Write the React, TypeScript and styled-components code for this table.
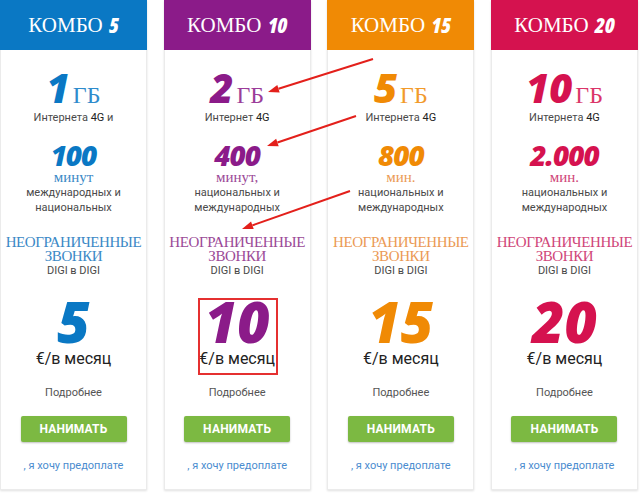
import React from "react";
import styled, { createGlobalStyle } from "styled-components";

const Global = createGlobalStyle`
  html, body { margin: 0; padding: 0; background: #ffffff; }
  body { font-family: Roboto, "Liberation Sans", sans-serif; }
`;

type Plan = {
  name: string;
  color: string;
  soft: string;
  gb: string;
  internet: string;
  minutes: string;
  minLabel: string;
  minDesc: string[];
  price: string;
};

const plans: Plan[] = [
  {
    name: "5",
    color: "#0a78c4",
    soft: "#3b89c6",
    gb: "1",
    internet: "Интернета",
    minutes: "100",
    minLabel: "минут",
    minDesc: ["международных и", "национальных"],
    price: "5",
  },
  {
    name: "10",
    color: "#8b1b89",
    soft: "#9b4a97",
    gb: "2",
    internet: "Интернет",
    minutes: "400",
    minLabel: "минут,",
    minDesc: ["национальных и", "международных"],
    price: "10",
  },
  {
    name: "15",
    color: "#f08a05",
    soft: "#eb9a55",
    gb: "5",
    internet: "Интернета",
    minutes: "800",
    minLabel: "мин.",
    minDesc: ["национальных и", "международных"],
    price: "15",
  },
  {
    name: "20",
    color: "#d5124f",
    soft: "#d04679",
    gb: "10",
    internet: "Интернета",
    minutes: "2.000",
    minLabel: "мин.",
    minDesc: ["национальных и", "международных"],
    price: "20",
  },
];

const Page = styled.div`
  position: relative;
  width: 640px;
  height: 493px;
  overflow: hidden;
`;

const Grid = styled.div`
  display: grid;
  grid-template-columns: repeat(4, 147px);
  justify-content: space-between;
  width: 638px;
`;

const Card = styled.div`
  display: flex;
  flex-direction: column;
  align-items: center;
  background: #fff;
  border: 1px solid #ebebeb;
  border-top: none;
  box-shadow: 0 1px 2px rgba(0, 0, 0, 0.12);
  padding-bottom: 16px;
  text-align: center;
`;

const Header = styled.div<{ $bg: string }>`
  align-self: stretch;
  height: 50px;
  margin: 0 -1px;
  background: ${(p) => p.$bg};
  color: #fff;
  display: flex;
  justify-content: center;
  align-items: center;
  gap: 6px;
  line-height: 50px;
`;

const HeaderWord = styled.span`
  font-family: "Liberation Serif", serif;
  font-size: 21px;
`;

const HeaderNum = styled.span`
  font-family: "Open Sans", sans-serif;
  font-weight: 800;
  font-style: italic;
  font-size: 21px;
  font-stretch: 87.5%;
`;

const GbRow = styled.div<{ $color: string }>`
  margin-top: 16px;
  display: flex;
  align-items: baseline;
  gap: 3px;
  height: 44px;
  line-height: 44px;
  color: ${(p) => p.$color};
`;

const BigNum = styled.span<{ $size: number; $stretch: number; $ls: number }>`
  display: inline-block;
  font-family: "Open Sans", sans-serif;
  font-weight: 800;
  font-style: italic;
  font-stretch: ${(p) => p.$stretch}%;
  font-size: ${(p) => p.$size}px;
  letter-spacing: ${(p) => p.$ls}px;
  line-height: inherit;
`;

const SerifUnit = styled.span`
  display: inline-block;
  font-family: "Liberation Serif", serif;
  font-size: 24px;
  line-height: inherit;
  opacity: 0.85;
`;

const Small = styled.div<{ $color?: string }>`
  font-size: 11px;
  line-height: 15px;
  color: ${(p) => p.$color || "#4a4a4a"};
`;

const Strong = styled.span`
  color: #222;
`;

const Minutes = styled.div<{ $color: string }>`
  margin-top: 15px;
  height: 30px;
  line-height: 30px;
  color: ${(p) => p.$color};
`;

const MinLabel = styled.div<{ $color: string }>`
  font-family: "Liberation Serif", serif;
  font-size: 15px;
  line-height: 15px;
  color: ${(p) => p.$color};
`;

const Unlimited = styled.div<{ $color: string }>`
  margin-top: 20px;
  font-family: "Liberation Serif", serif;
  font-size: 15px;
  line-height: 14px;
  letter-spacing: -0.4px;
  color: ${(p) => p.$color};
`;

const Price = styled.div<{ $color: string }>`
  margin-top: 15px;
  height: 56px;
  line-height: 56px;
  color: ${(p) => p.$color};
`;

const PerMonth = styled.div`
  font-size: 16px;
  line-height: 20px;
  color: #222;
`;

const More = styled.div`
  margin-top: 16px;
  font-size: 11px;
  line-height: 15px;
  color: #555;
`;

const Button = styled.button`
  margin-top: 16px;
  width: 106px;
  height: 26px;
  border: none;
  border-radius: 2px;
  background: #7cb942;
  color: #fff;
  font-family: Roboto, "Liberation Sans", sans-serif;
  font-weight: 700;
  font-size: 12px;
  letter-spacing: 0.2px;
  box-shadow: 0 1px 2px rgba(0, 0, 0, 0.25);
  padding: 0;
`;

const Prepay = styled.div`
  margin-top: 16px;
  font-size: 11px;
  line-height: 15px;
  color: #4a8ccf;
`;

const Overlay = styled.svg`
  position: absolute;
  left: 0;
  top: 0;
  pointer-events: none;
`;

function Arrow({ x1, y1, x2, y2 }: { x1: number; y1: number; x2: number; y2: number }) {
  const dx = x2 - x1;
  const dy = y2 - y1;
  const len = Math.hypot(dx, dy);
  const ux = dx / len;
  const uy = dy / len;
  const hl = 11;
  const hw = 4;
  const bx = x2 - ux * hl;
  const by = y2 - uy * hl;
  const px = -uy;
  const py = ux;
  const pts = `${x2},${y2} ${bx + px * hw},${by + py * hw} ${bx - px * hw},${by - py * hw}`;
  return (
    <g>
      <line x1={x1} y1={y1} x2={bx} y2={by} stroke="#e3201b" strokeWidth={2} />
      <polygon points={pts} fill="#e3201b" />
    </g>
  );
}

function PlanCard({ p }: { p: Plan }) {
  return (
    <Card>
      <Header $bg={p.color}>
        <HeaderWord>КОМБО</HeaderWord>
        <HeaderNum>{p.name}</HeaderNum>
      </Header>
      <GbRow $color={p.color}>
        <BigNum $size={40} $stretch={93.75} $ls={0}>
          {p.gb}
        </BigNum>
        <SerifUnit>ГБ</SerifUnit>
      </GbRow>
      <Small>
        {p.internet} <Strong>4G</Strong>
        {p.name === "5" ? " и" : ""}
      </Small>
      <Minutes $color={p.color}>
        <BigNum $size={28} $stretch={100} $ls={-1}>
          {p.minutes}
        </BigNum>
      </Minutes>
      <MinLabel $color={p.soft}>{p.minLabel}</MinLabel>
      {p.minDesc.map((d) => (
        <Small key={d}>{d}</Small>
      ))}
      <Unlimited $color={p.soft}>
        НЕОГРАНИЧЕННЫЕ
        <br />
        ЗВОНКИ
      </Unlimited>
      <Small>DIGI в DIGI</Small>
      <Price $color={p.color}>
        <BigNum $size={56} $stretch={93.75} $ls={0}>
          {p.price}
        </BigNum>
      </Price>
      <PerMonth>€/в месяц</PerMonth>
      <More>Подробнее</More>
      <Button>НАНИМАТЬ</Button>
      <Prepay>, я хочу предоплате</Prepay>
    </Card>
  );
}

export default function App() {
  return (
    <Page>
      <Global />
      <Grid>
        {plans.map((p) => (
          <PlanCard key={p.name} p={p} />
        ))}
      </Grid>
      <Overlay width={640} height={493} viewBox="0 0 640 493">
        <Arrow x1={373} y1={59} x2={268} y2={92} />
        <Arrow x1={356} y1={116} x2={267} y2={146} />
        <Arrow x1={350} y1={191} x2={242} y2={229} />
        <rect x={199} y={299} width={78} height={75} fill="none" stroke="#e53030" strokeWidth={2} />
      </Overlay>
    </Page>
  );
}
